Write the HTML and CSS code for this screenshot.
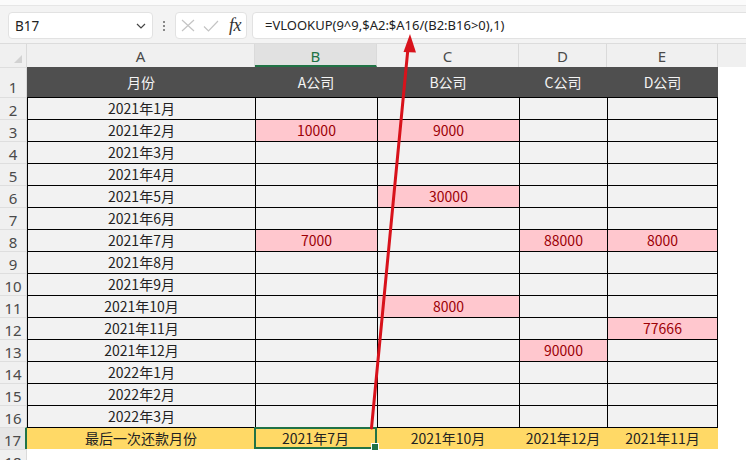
FILE: index.html
```html
<!DOCTYPE html>
<html lang="zh">
<head>
<meta charset="utf-8">
<title>VLOOKUP</title>
<link rel="stylesheet" href="styles.css">
</head>
<body>
<div class="app">
  <div class="ribbon-edge"></div>
  <div class="fbar">
    <div class="namebox">
      <span>B17</span>
      <svg class="chev" width="10" height="6" viewBox="0 0 10 6"><path d="M1 1 L5 5 L9 1" fill="none" stroke="#444" stroke-width="1.2"/></svg>
    </div>
    <div class="dots"><i></i><i></i><i></i></div>
    <div class="fxbox">
      <svg width="14" height="13" viewBox="0 0 14 13"><path d="M1 1 L13 12 M13 1 L1 12" stroke="#c4c4c4" stroke-width="1.2" fill="none"/></svg>
      <svg width="16" height="12" viewBox="0 0 16 12"><path d="M1 6.5 L5.5 11 L15 1" stroke="#c4c4c4" stroke-width="1.2" fill="none"/></svg>
      <span class="fx">fx</span>
    </div>
    <div class="formula">=VLOOKUP(9^9,$A2:$A16/(B2:B16&gt;0),1)</div>
  </div>
  <div class="sheet">
    <div class="corner"><span class="tri"></span></div>
    <div class="ch">A</div><div class="ch sel">B</div><div class="ch">C</div><div class="ch">D</div><div class="ch">E</div><div class="ch last"></div>

    <div class="rh r1">1</div>
    <div class="hd">月份</div><div class="hd">A公司</div><div class="hd">B公司</div><div class="hd">C公司</div><div class="hd">D公司</div><div class="f"></div>

    <div class="rh">2</div>
    <div class="c">2021年1月</div><div class="c"></div><div class="c"></div><div class="c"></div><div class="c e"></div><div class="f"></div>
    <div class="rh">3</div>
    <div class="c">2021年2月</div><div class="c pink">10000</div><div class="c pink">9000</div><div class="c"></div><div class="c e"></div><div class="f"></div>
    <div class="rh">4</div>
    <div class="c">2021年3月</div><div class="c"></div><div class="c"></div><div class="c"></div><div class="c e"></div><div class="f"></div>
    <div class="rh">5</div>
    <div class="c">2021年4月</div><div class="c"></div><div class="c"></div><div class="c"></div><div class="c e"></div><div class="f"></div>
    <div class="rh">6</div>
    <div class="c">2021年5月</div><div class="c"></div><div class="c pink">30000</div><div class="c"></div><div class="c e"></div><div class="f"></div>
    <div class="rh">7</div>
    <div class="c">2021年6月</div><div class="c"></div><div class="c"></div><div class="c"></div><div class="c e"></div><div class="f"></div>
    <div class="rh">8</div>
    <div class="c">2021年7月</div><div class="c pink">7000</div><div class="c"></div><div class="c pink">88000</div><div class="c e pink">8000</div><div class="f"></div>
    <div class="rh">9</div>
    <div class="c">2021年8月</div><div class="c"></div><div class="c"></div><div class="c"></div><div class="c e"></div><div class="f"></div>
    <div class="rh">10</div>
    <div class="c">2021年9月</div><div class="c"></div><div class="c"></div><div class="c"></div><div class="c e"></div><div class="f"></div>
    <div class="rh">11</div>
    <div class="c">2021年10月</div><div class="c"></div><div class="c pink">8000</div><div class="c"></div><div class="c e"></div><div class="f"></div>
    <div class="rh">12</div>
    <div class="c">2021年11月</div><div class="c"></div><div class="c"></div><div class="c"></div><div class="c e pink">77666</div><div class="f"></div>
    <div class="rh">13</div>
    <div class="c">2021年12月</div><div class="c"></div><div class="c"></div><div class="c pink">90000</div><div class="c e"></div><div class="f"></div>
    <div class="rh">14</div>
    <div class="c">2022年1月</div><div class="c"></div><div class="c"></div><div class="c"></div><div class="c e"></div><div class="f"></div>
    <div class="rh">15</div>
    <div class="c">2022年2月</div><div class="c"></div><div class="c"></div><div class="c"></div><div class="c e"></div><div class="f"></div>
    <div class="rh">16</div>
    <div class="c">2022年3月</div><div class="c"></div><div class="c"></div><div class="c"></div><div class="c e"></div><div class="f"></div>

    <div class="rh rsel">17</div>
    <div class="tot">最后一次还款月份</div><div class="tot active">2021年7月</div><div class="tot">2021年10月</div><div class="tot">2021年12月</div><div class="tot">2021年11月</div><div class="f"></div>

    <div class="rh">18</div>
    <div class="w"></div><div class="w"></div><div class="w"></div><div class="w"></div><div class="w"></div><div class="f"></div>
  </div>
  <svg class="arrow" width="746" height="460" viewBox="0 0 746 460">
    <line x1="371.5" y1="428" x2="408" y2="48" stroke="#d8121b" stroke-width="3" stroke-linecap="round"/>
    <polygon points="410,34 403.5,52 416,52.5" fill="#d8121b"/>
  </svg>
</div>
</body>
</html>
```
FILE: styles.css
```css
* { box-sizing: border-box; }
html, body { margin: 0; padding: 0; }
body {
  width: 746px;
  height: 460px;
  overflow: hidden;
  background: #ffffff;
  font-family: "Noto Sans CJK SC", "Noto Sans", sans-serif;
}
.app {
  position: relative;
  width: 746px;
  height: 460px;
  overflow: hidden;
  background: #f3f3f3;
}
.ribbon-edge {
  height: 6px;
  background: #fbfbfb;
  border-bottom: 1px solid #e6e6e6;
}
.fbar {
  height: 38px;
  display: flex;
  align-items: flex-start;
  padding-top: 6px;
  padding-left: 8px;
  border-bottom: 1px solid #dcdcdc;
}
.namebox {
  width: 145px;
  height: 27px;
  background: #fff;
  border: 1px solid #e2e2e2;
  border-radius: 4px;
  display: flex;
  align-items: center;
  justify-content: space-between;
  padding: 0 6px 0 6px;
  font-family: "Noto Sans", sans-serif;
  font-size: 13.5px;
  color: #222;
}
.chev { margin-top: 1px; }
.dots {
  width: 22px;
  height: 27px;
  display: flex;
  flex-direction: column;
  align-items: center;
  justify-content: center;
  gap: 2px;
}
.dots i {
  display: block;
  width: 2px;
  height: 2px;
  background: #888;
}
.fxbox {
  width: 72px;
  height: 27px;
  background: #fff;
  border: 1px solid #e2e2e2;
  border-radius: 4px;
  display: flex;
  align-items: center;
  padding-left: 5px;
  gap: 8px;
}
.fx {
  font-family: "Liberation Serif", serif;
  font-style: italic;
  font-size: 18px;
  color: #333;
  margin-left: 2px;
  letter-spacing: -0.5px;
}
.formula {
  flex: 1;
  height: 27px;
  margin-left: 5px;
  margin-right: -8px;
  background: #fff;
  border: 1px solid #e2e2e2;
  border-radius: 4px;
  padding-left: 12px;
  font-family: "Noto Sans", sans-serif;
  font-size: 13px;
  line-height: 25px;
  color: #222;
}
.sheet {
  display: grid;
  grid-template-columns: 27px 228px 122px 142px 88px 111px 1fr;
  grid-template-rows: 23px 30px repeat(16, 22px) 1fr;
  height: 416px;
  font-size: 14px;
  color: #222;
}
.corner {
  position: relative;
  background: #f0f0f0;
  border-right: 1px solid #dadada;
}
.tri {
  position: absolute;
  right: 4px;
  bottom: 4px;
  width: 0;
  height: 0;
  border-left: 8px solid transparent;
  border-bottom: 8px solid #d2d2d2;
}
.ch {
  background: #f0f0f0;
  border-right: 1px solid #dadada;
  text-align: center;
  font-family: "Noto Sans", sans-serif;
  font-size: 15px;
  line-height: 25px;
  color: #4a4a4a;
}
.ch.sel {
  background: #e1e1e1;
  color: #217346;
  border-bottom: 2px solid #217346;
}
.ch.last { border-right: none; }
.rh {
  background: #f0f0f0;
  text-align: center;
  font-family: "Noto Sans", sans-serif;
  font-size: 15px;
  line-height: 17px;
  padding-top: 4px;
  color: #4a4a4a;
  border-top: 1px solid #dedede;
  border-right: 1px solid #dadada;
}
.rh.r1 { padding-top: 11px; }
.rh.rsel {
  background: #e6e6e6;
  border-right: 2px solid #217346;
}
.hd {
  background: #4f4f4f;
  color: #f4f4f4;
  text-align: center;
  line-height: 30px;
}
.c {
  background: #f2f2f2;
  border-top: 1px solid #000;
  border-left: 1px solid #000;
  text-align: center;
  line-height: 21px;
}
.c.e { border-right: 1px solid #000; }
.c.pink {
  background: #ffc7ce;
  color: #9c0006;
}
.c.pink.e { border-right: 1px solid #000; }
.tot {
  background: #ffd966;
  border-top: 1px solid #000;
  text-align: center;
  line-height: 21px;
  color: #222;
}
.tot.active {
  position: relative;
  border: 2px solid #217346;
  margin-left: -1px;
  line-height: 18px;
}
.tot.active::after {
  content: "";
  position: absolute;
  right: -4px;
  bottom: -4px;
  width: 6px;
  height: 6px;
  background: #217346;
  border: 1px solid #fff;
}
.f { background: #ffffff; }
.w { background: #ffffff; }
.arrow {
  position: absolute;
  left: 0;
  top: 0;
  pointer-events: none;
}
```
